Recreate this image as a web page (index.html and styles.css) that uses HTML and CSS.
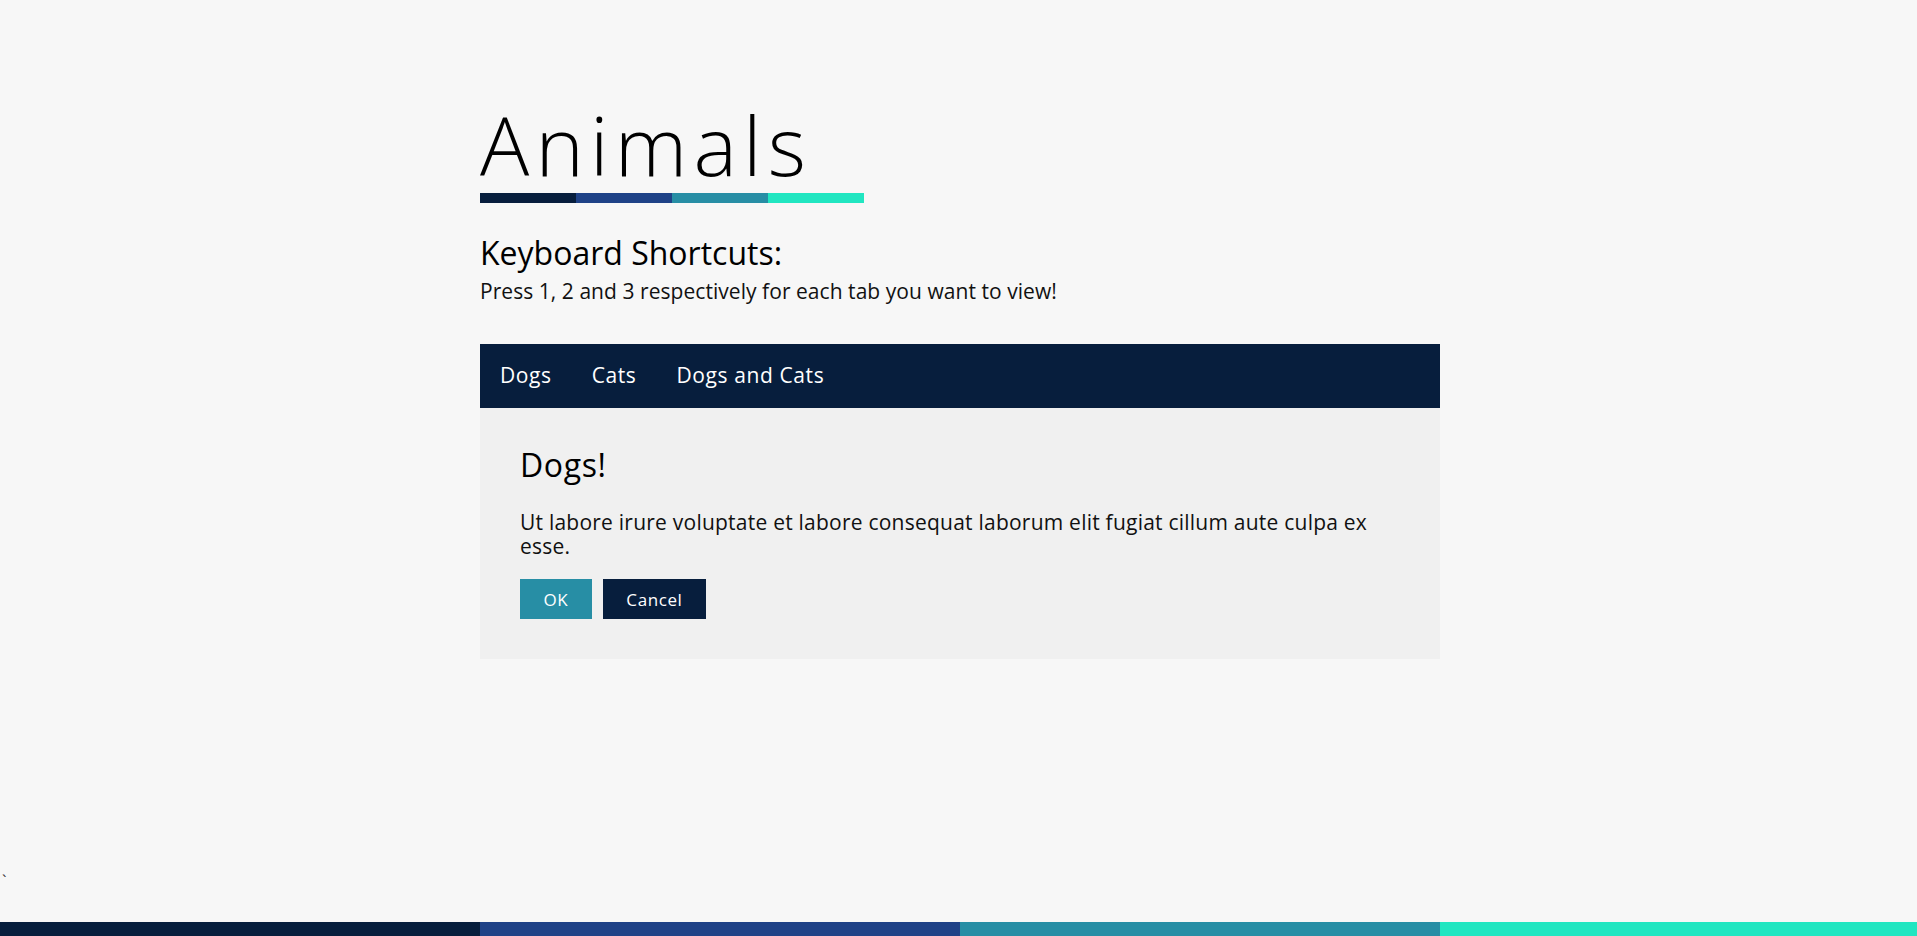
FILE: index.html
```html
<!DOCTYPE html>
<html lang="en">
<head>
<meta charset="utf-8">
<title>Animals</title>
<link rel="stylesheet" href="styles.css">
</head>
<body>
<div class="page">
  <main class="main">
    <h1 class="title">Animals</h1>
    <div class="title-bar">
      <span class="seg seg-navy"></span>
      <span class="seg seg-blue"></span>
      <span class="seg seg-teal"></span>
      <span class="seg seg-mint"></span>
    </div>
    <h2 class="shortcuts-title">Keyboard Shortcuts:</h2>
    <p class="shortcuts-text">Press 1, 2 and 3 respectively for each tab you want to view!</p>

    <section class="tabs">
      <nav class="tab-list">
        <a class="tab" href="#dogs">Dogs</a>
        <a class="tab" href="#cats">Cats</a>
        <a class="tab" href="#both">Dogs and Cats</a>
      </nav>
      <div class="tab-panel">
        <h3 class="panel-title">Dogs!</h3>
        <p class="panel-text">Ut labore irure voluptate et labore consequat laborum elit fugiat cillum aute culpa ex esse.</p>
        <div class="actions">
          <button class="btn btn-ok">OK</button>
          <button class="btn btn-cancel">Cancel</button>
        </div>
      </div>
    </section>
  </main>
  <div class="stray">`</div>
  <footer class="footer-bar">
    <span class="seg seg-navy"></span>
    <span class="seg seg-blue"></span>
    <span class="seg seg-teal"></span>
    <span class="seg seg-mint"></span>
  </footer>
</div>
</body>
</html>
```
FILE: styles.css
```css
html, body {
  margin: 0;
  padding: 0;
  overflow: hidden;
  background: #f7f7f7;
}

body {
  font-family: "Open Sans", "Noto Sans", sans-serif;
  color: #111;
}

.page {
  width: 1920px;
  min-height: 100vh;
  display: flex;
  flex-direction: column;
}

.main {
  flex: 1;
  width: 960px;
  margin: 0 auto;
  padding-top: 103px;
  box-sizing: border-box;
}

.title {
  margin: 0;
  font-size: 82px;
  line-height: 82px;
  font-weight: 300;
  letter-spacing: 6.2px;
  color: #000;
}

.title-bar {
  display: flex;
  width: 384px;
  height: 10px;
  margin-top: 8px;
}

.seg { flex: 1; }
.seg-navy { background: #071e3d; }
.seg-blue { background: #1f4287; }
.seg-teal { background: #278ea5; }
.seg-mint { background: #21e6c1; }

.shortcuts-title {
  margin: 30px 0 0;
  font-size: 32px;
  line-height: 40px;
  font-weight: 500;
  color: #000;
}

.shortcuts-text {
  margin: 6px 0 0;
  font-size: 21px;
  line-height: 24px;
  letter-spacing: 0.05px;
}

.tabs {
  margin-top: 41px;
}

.tab-list {
  display: flex;
  background: #071e3d;
  height: 64px;
}

.tab {
  display: block;
  padding: 19px 20px 21px;
  font-size: 21px;
  line-height: 24px;
  letter-spacing: 0.6px;
  color: #fff;
  text-decoration: none;
}

.tab-panel {
  background: #f0f0f0;
  padding: 37px 40px 40px;
}

.panel-title {
  margin: 0;
  font-size: 32px;
  line-height: 40px;
  font-weight: 500;
  letter-spacing: 0.6px;
  color: #000;
}

.panel-text {
  margin: 25px 0 0;
  font-size: 21px;
  line-height: 24px;
  letter-spacing: 0.23px;
}

.actions {
  display: flex;
  gap: 11px;
  margin-top: 21px;
}

.btn {
  height: 40px;
  padding: 0 23.5px;
  border: none;
  font-family: inherit;
  font-size: 17px;
  letter-spacing: 0.6px;
  color: #fff;
  cursor: pointer;
}

.btn-ok { background: #278ea5; }
.btn-cancel { background: #071e3d; }

.stray {
  margin-bottom: 31px;
  padding-left: 2px;
  font-size: 16px;
  line-height: 20px;
  color: #333;
}

.footer-bar {
  display: flex;
  height: 14px;
}
```
